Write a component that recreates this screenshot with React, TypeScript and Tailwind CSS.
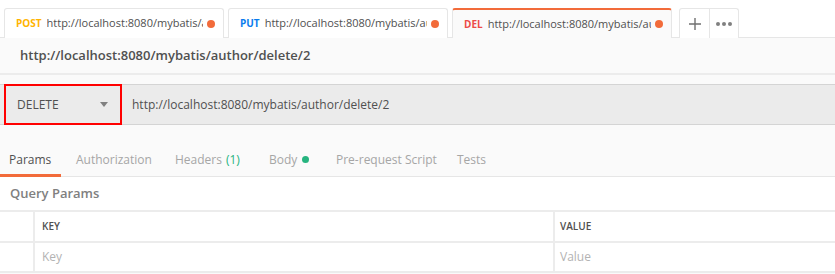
const tabs = [
  { method: "POST", color: "text-[#ffb400]", url: "http://localhost:8080/mybatis/a", active: false },
  { method: "PUT", color: "text-[#097bed]", url: "http://localhost:8080/mybatis/au", active: false },
  { method: "DEL", color: "text-[#ed4b48]", url: "http://localhost:8080/mybatis/au", active: true },
];

const App = () => {
  return (
    <div className="w-[835px] h-[274px] overflow-hidden bg-[#fafafa] font-['Open_Sans',sans-serif] text-[#505050]">
      {/* tab strip */}
      <div className="flex items-end h-[38px] bg-white border-b border-[#e6e6e6] pl-[4px] gap-[4px]">
        {tabs.map((t) => (
          <div
            key={t.method}
            className={`relative flex items-center w-[220px] h-[30px] -mb-px pl-[11px] pr-[8px] border border-b-0 rounded-t-[3px] ${
              t.active ? "bg-[#fafafa] border-[#e6e6e6] border-t-2 border-t-[#f26b3a]" : "bg-white border-[#e6e6e6]"
            }`}
          >
            <span className={`text-[10px] font-bold mr-[5px] ${t.color}`}>{t.method}</span>
            <span className="flex-1 overflow-hidden whitespace-nowrap text-[11px] text-[#505050]">{t.url}</span>
            <span className="ml-[4px] w-[8px] h-[8px] rounded-full bg-[#f26b3a] shrink-0" />
          </div>
        ))}
        <div className="flex h-[30px] -mb-px ml-[3px] border border-b-0 border-[#e6e6e6] rounded-t-[3px] bg-white">
          <div className="w-[30px] flex items-center justify-center border-r border-[#e6e6e6]">
            <svg width="12" height="12" viewBox="0 0 12 12">
              <path d="M6 0v12M0 6h12" stroke="#707070" strokeWidth="1.4" />
            </svg>
          </div>
          <div className="w-[28px] flex items-center justify-center gap-[2px]">
            <span className="w-[4px] h-[4px] rounded-full bg-[#808080]" />
            <span className="w-[4px] h-[4px] rounded-full bg-[#808080]" />
            <span className="w-[4px] h-[4px] rounded-full bg-[#808080]" />
          </div>
        </div>
      </div>

      {/* request name */}
      <div className="h-[37px] flex items-center pl-[20px] border-b-2 border-[#ececec]">
        <span className="text-[13px] font-semibold text-[#505050]">http://localhost:8080/mybatis/author/delete/2</span>
      </div>

      {/* request bar */}
      <div className="mt-[9px] h-[41px] flex bg-[#ebebeb] border-y border-[#d4d4d4]">
        <div className="ml-[4px] -my-px w-[118px] flex items-center justify-between pl-[11px] pr-[12px] border-2 border-[#ff0000]">
          <span className="text-[12px] text-[#505050]">DELETE</span>
          <svg width="8" height="5" viewBox="0 0 8 5">
            <path d="M0 0h8L4 5z" fill="#808080" />
          </svg>
        </div>
        <div className="flex items-center pl-[10px] text-[12px] text-[#505050]">
          http://localhost:8080/mybatis/author/delete/2
        </div>
      </div>

      {/* tabs */}
      <div className="mt-[18px] h-[34px] flex items-stretch border-b border-[#e6e6e6] text-[12px] text-[#a6a6a6]">
        <div className="relative w-[61px] pl-[9px] flex items-center text-[#505050]">
          Params
          <span className="absolute left-0 right-0 bottom-[-1px] h-[3px] bg-[#f26b3a]" />
        </div>
        <div className="pl-[15px] w-[114px] flex items-center">Authorization</div>
        <div className="w-[94px] flex items-center">
          Headers <span className="ml-[4px] text-[#26b47f]">(1)</span>
        </div>
        <div className="w-[67px] flex items-center">
          Body <span className="ml-[5px] w-[7px] h-[7px] rounded-full bg-[#26b47f]" />
        </div>
        <div className="w-[121px] flex items-center">Pre-request Script</div>
        <div className="flex items-center">Tests</div>
      </div>

      {/* query params */}
      <div className="bg-white">
        <div className="h-[33px] flex items-center pl-[10px] text-[13px] font-semibold text-[#808080]">Query Params</div>
        <div className="border-t-2 border-[#ececec]">
          <div className="flex h-[31px] border-b-2 border-[#ececec]">
            <div className="w-[35px] border-r-2 border-[#ececec]" />
            <div className="w-[520px] flex items-center pl-[7px] text-[10px] font-semibold text-[#505050] border-r-2 border-[#ececec]">KEY</div>
            <div className="flex-1 flex items-center pl-[5px] text-[10px] font-semibold text-[#505050]">VALUE</div>
          </div>
          <div className="flex h-[30px] border-b-2 border-[#ececec]">
            <div className="w-[35px] border-r-2 border-[#ececec]" />
            <div className="w-[520px] flex items-center pl-[7px] text-[12px] text-[#b3b3b3] border-r-2 border-[#ececec]">Key</div>
            <div className="flex-1 flex items-center pl-[5px] text-[12px] text-[#b3b3b3]">Value</div>
          </div>
        </div>
      </div>
    </div>
  );
};

export default App;
